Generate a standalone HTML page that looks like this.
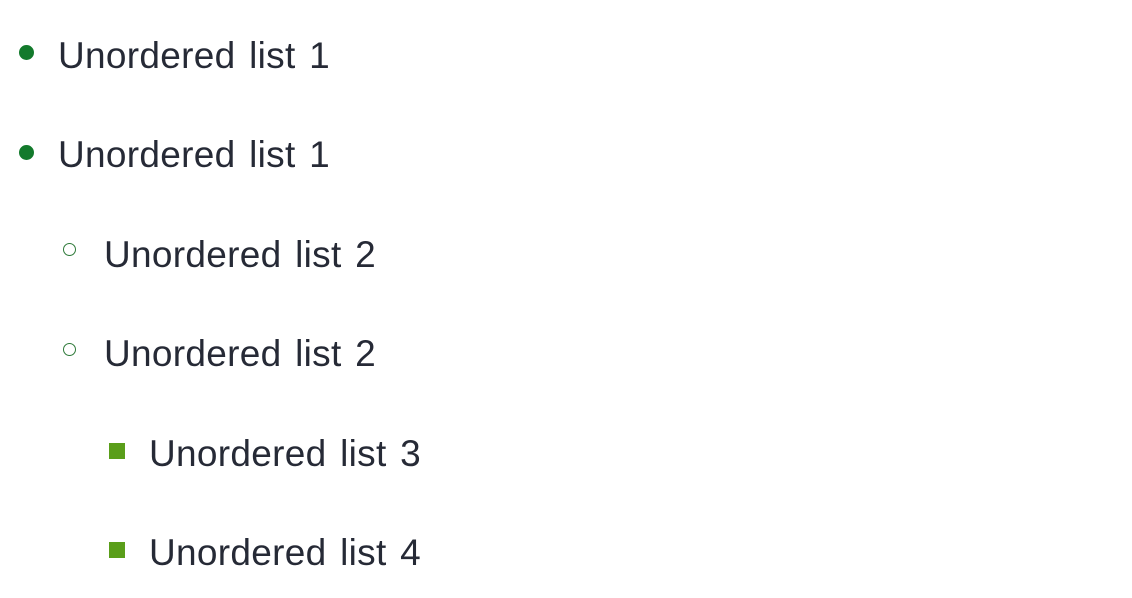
<!DOCTYPE html>
<html><head><style>
html,body{margin:0;padding:0;background:#fff;width:1132px;height:598px;overflow:hidden}
.t{position:absolute;font-family:"Liberation Sans",Arial,sans-serif;font-size:37px;color:#262a36;letter-spacing:0.3px;word-spacing:3px;line-height:1;white-space:nowrap}
.b{position:absolute}
</style></head><body>
<div class="b" style="left:19px;top:45px;width:15px;height:15px;border-radius:50%;background:#137a2c"></div>
<div class="t" style="left:58px;top:37px">Unordered list 1</div>
<div class="b" style="left:19px;top:145px;width:15px;height:15px;border-radius:50%;background:#137a2c"></div>
<div class="t" style="left:58px;top:136px">Unordered list 1</div>
<div class="b" style="left:63px;top:243px;width:13px;height:13px;border-radius:50%;border:1px solid #2f7a3a;box-sizing:border-box"></div>
<div class="t" style="left:104px;top:236px">Unordered list 2</div>
<div class="b" style="left:63px;top:343px;width:13px;height:13px;border-radius:50%;border:1px solid #2f7a3a;box-sizing:border-box"></div>
<div class="t" style="left:104px;top:335px">Unordered list 2</div>
<div class="b" style="left:109px;top:443px;width:16px;height:16px;background:#5a9e1a"></div>
<div class="t" style="left:149px;top:435px">Unordered list 3</div>
<div class="b" style="left:109px;top:542px;width:16px;height:16px;background:#5a9e1a"></div>
<div class="t" style="left:149px;top:534px">Unordered list 4</div>
</body></html>
